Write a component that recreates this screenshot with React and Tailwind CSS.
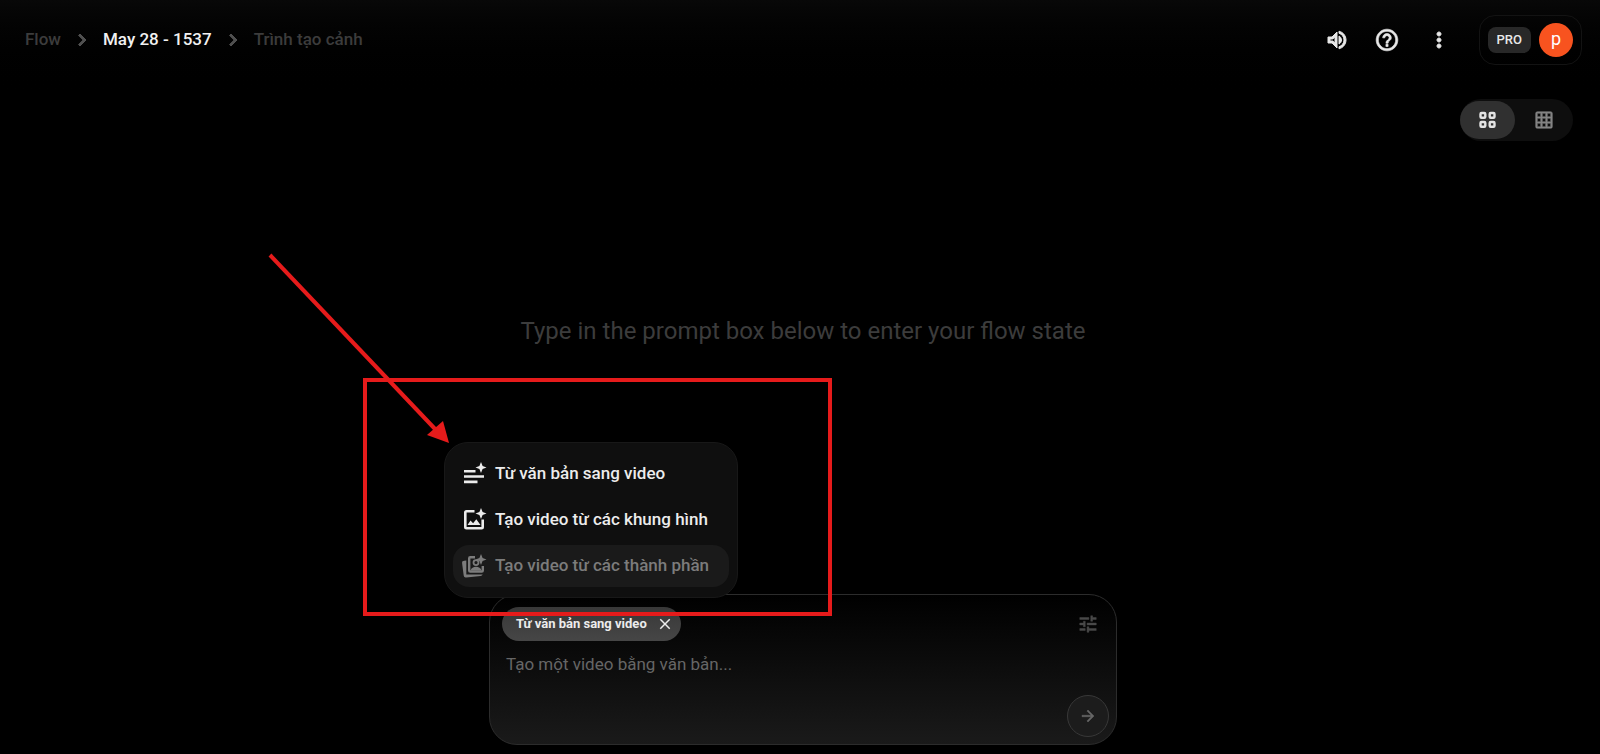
import React, { useState } from 'react';
import {
    MdOutlineVolumeUp,
    MdHelpOutline,
    MdMoreVert,
    MdGridOn,
    MdTune,
    MdArrowForward,
    MdChevronRight,
    MdClose,
} from 'react-icons/md';

const SPARKLE = 'M19 0l1.6 3.9 3.9 1.6-3.9 1.6L19 11l-1.600-3.900-3.900-1.600 3.900-1.600z';

const TextSparkIcon = () => (
    <svg width="24" height="24" viewBox="0 0 24 24" fill="currentColor" className="overflow-visible" aria-hidden="true">
        <path d={SPARKLE} />
        <path d="M2 8h11.5v2.6H2zM2 13.2h20v2.6H2zM2 18.6h13.5v2.6H2z" />
    </svg>
);

const ImageSparkIcon = () => (
    <svg width="24" height="24" viewBox="0 0 24 24" fill="currentColor" className="overflow-visible" aria-hidden="true">
        <path d={SPARKLE} />
        <path d="M12.5 2v2.500H4.600v14.500h14.800v-7.500H22V19a2.500 2.500 0 0 1-2.500 2.500h-15A2.500 2.500 0 0 1 2 19V4.500A2.500 2.500 0 0 1 4.500 2z" />
        <path d="M5.500 17l3-4.500 2.600 2.800 3.200-4 4.200 5.700z" />
    </svg>
);

const PortraitSparkIcon = () => (
    <svg width="24" height="24" viewBox="0 0 24 24" fill="currentColor" className="overflow-visible" aria-hidden="true">
        <path d={SPARKLE} />
        <path d="M13 2v2.400H8.400v11.900h11.200V12H22v4.500a2.200 2.200 0 0 1-2.200 2.200H8.200A2.200 2.200 0 0 1 6 16.500V4.200A2.200 2.200 0 0 1 8.200 2z" />
        <circle cx="14" cy="8.6" r="2.5" fill="none" stroke="currentColor" strokeWidth="1.8" />
        <path d="M8.500 16.500c.8-2.600 2.800-3.800 5.500-3.800s4.700 1.200 5.500 3.800z" />
        <path d="M4.300 6.500l-2 .3A2.200 2.200 0 0 0 .1 9.200l1.600 12.400a2.200 2.200 0 0 0 2.500 1.900l14.500-1.600a2.200 2.200 0 0 0 2-1.300H4.300z" />
    </svg>
);

const GridIcon = () => (
    <svg width="20" height="20" viewBox="0 0 20 20" fill="none" stroke="currentColor" strokeWidth="2.4" aria-hidden="true">
        <rect x="2.5" y="3" width="4.8" height="4.8" rx="1" />
        <rect x="11.7" y="3" width="4.8" height="4.8" rx="1" />
        <rect x="2.5" y="12" width="4.8" height="4.8" rx="1" />
        <rect x="11.7" y="12" width="4.8" height="4.8" rx="1" />
    </svg>
);

// thickens a Material icon without outlining its empty bounding path
const bold = '[&>path[fill=none]]:hidden';

const modes = [
    { label: 'Từ văn bản sang video', Icon: TextSparkIcon },
    { label: 'Tạo video từ các khung hình', Icon: ImageSparkIcon },
    { label: 'Tạo video từ các thành phần', Icon: PortraitSparkIcon, disabled: true },
];

const Header = () => (
    <header className="flex items-center justify-between pl-[25px] pr-[18px] pt-[15px]">
        <nav aria-label="Breadcrumb" className="flex items-center gap-[9px] text-[17px] font-medium text-[#3c3c3c]">
            <a href="#flow">Flow</a>
            <MdChevronRight size={24} strokeWidth={1} className={`${bold} text-[#505050]`} />
            <a href="#project" className="text-[#f1f1f1]">May 28 - 1537</a>
            <MdChevronRight size={24} strokeWidth={1} className={`${bold} text-[#505050]`} />
            <a href="#scene">Trình tạo cảnh</a>
        </nav>
        <div className="flex items-center text-[#e8e8e8]">
            <button aria-label="Âm thanh" className="mr-[25px]">
                <MdOutlineVolumeUp size={24} strokeWidth={1} className={bold} />
            </button>
            <button aria-label="Trợ giúp" className="mr-[27px]">
                <MdHelpOutline size={26} strokeWidth={0.6} className={bold} />
            </button>
            <button aria-label="Thêm" className="mr-7">
                <MdMoreVert size={24} strokeWidth={1} className={bold} />
            </button>
            <button className="flex h-[50px] items-center gap-2 rounded-2xl border border-[#131313] px-2">
                <span className="flex h-[26px] items-center rounded-lg bg-[#282828] px-[9px] text-[13px] font-medium">PRO</span>
                <span className="flex size-[34px] items-center justify-center rounded-full bg-[#f8531f] pb-0.5 text-lg text-white">p</span>
            </button>
        </div>
    </header>
);

const ViewToggle = () => (
    <div className="mr-[27px] mt-[34px] flex h-[42px] items-center self-end rounded-full bg-[#0e0e0e]">
        <button aria-label="Lưới lớn" aria-pressed="true" className="flex h-[38px] w-[55px] items-center justify-center rounded-full bg-[#303030] text-[#e4e4e4]">
            <GridIcon />
        </button>
        <button aria-label="Lưới nhỏ" aria-pressed="false" className="flex h-[38px] w-[58px] items-center justify-center text-[#858585]">
            <MdGridOn size={20} strokeWidth={0.6} className={bold} />
        </button>
    </div>
);

const ModeMenu = () => (
    <div role="menu" className="absolute -left-[46px] -top-[153px] flex w-[294px] flex-col gap-1 rounded-3xl border border-[#181818] bg-[#0f0f0f] px-2 py-2.5">
        {modes.map(({ label, Icon, disabled }) => (
            <button
                key={label}
                role="menuitem"
                disabled={disabled}
                className={`flex h-[42px] items-center gap-[9px] whitespace-nowrap rounded-2xl px-[9px] text-[17px] font-medium ${disabled ? 'bg-[#1a1a1a] text-[#7c7c7c]' : 'text-[#ececec]'}`}
            >
                <Icon />
                {label}
            </button>
        ))}
    </div>
);

// red frame and arrow that point at the mode menu
const Callout = () => (
    <svg
        className="pointer-events-none absolute -left-[230px] -top-[351px] z-10"
        width="580"
        height="380"
        viewBox="260 244 580 380"
        fill="none"
        aria-hidden="true"
    >
        <rect x="365" y="380" width="465" height="234" stroke="#e61b1b" strokeWidth="4" />
        <path d="M270 255 L436 430" stroke="#e61b1b" strokeWidth="4" />
        <path d="M449 443 L443 421 L427 435 Z" fill="#e61b1b" />
    </svg>
);

const PromptBox = () => {
    const [prompt, setPrompt] = useState('');

    return (
        <section className="relative mb-[9px] mt-auto flex w-full max-w-[628px] flex-col rounded-[28px] border border-[#2c2c2c] bg-linear-to-b/srgb from-black to-[#1a1a1a] pb-[7px] pl-2 pr-[7px] pt-3">
            <div className="flex items-center justify-between pl-1 pr-2.5">
                <button className="flex h-[34px] items-center gap-[9px] rounded-full bg-linear-to-b from-[#383838] to-[#464646] pl-3.5 pr-[7px] text-[13px] font-bold text-[#ececec]">
                    Từ văn bản sang video
                    <MdClose size={18} />
                </button>
                <button aria-label="Cài đặt" className="text-[#4a4a4a]">
                    <MdTune size={22} strokeWidth={0.5} className={bold} />
                </button>
            </div>
            <textarea
                aria-label="Câu lệnh"
                value={prompt}
                onChange={(e) => setPrompt(e.target.value)}
                placeholder="Tạo một video bằng văn bản..."
                rows={1}
                className="mt-[11px] h-[47px] resize-none bg-transparent px-2 text-[17px] leading-6 text-[#ececec] outline-none placeholder:text-[#666666]"
            />
            <button aria-label="Gửi" className="-mt-1 flex size-[42px] items-center justify-center self-end rounded-full border border-[#383838] bg-[#1c1c1c] text-[#666666]">
                <MdArrowForward size={18} strokeWidth={0.6} className={bold} />
            </button>
            <ModeMenu />
            <Callout />
        </section>
    );
};

const App = () => {
    return (
        <div className="flex min-h-screen flex-col bg-black bg-linear-to-b from-[#080808] to-black to-[100px] font-['Roboto','Noto_Sans',sans-serif]">
            <Header />
            <ViewToggle />
            <main className="flex flex-1 flex-col items-center pl-1.5">
                <h1 className="mt-[174px] text-2xl text-[#3c3c3c]">Type in the prompt box below to enter your flow state</h1>
                <PromptBox />
            </main>
        </div>
    );
};

export default App;
